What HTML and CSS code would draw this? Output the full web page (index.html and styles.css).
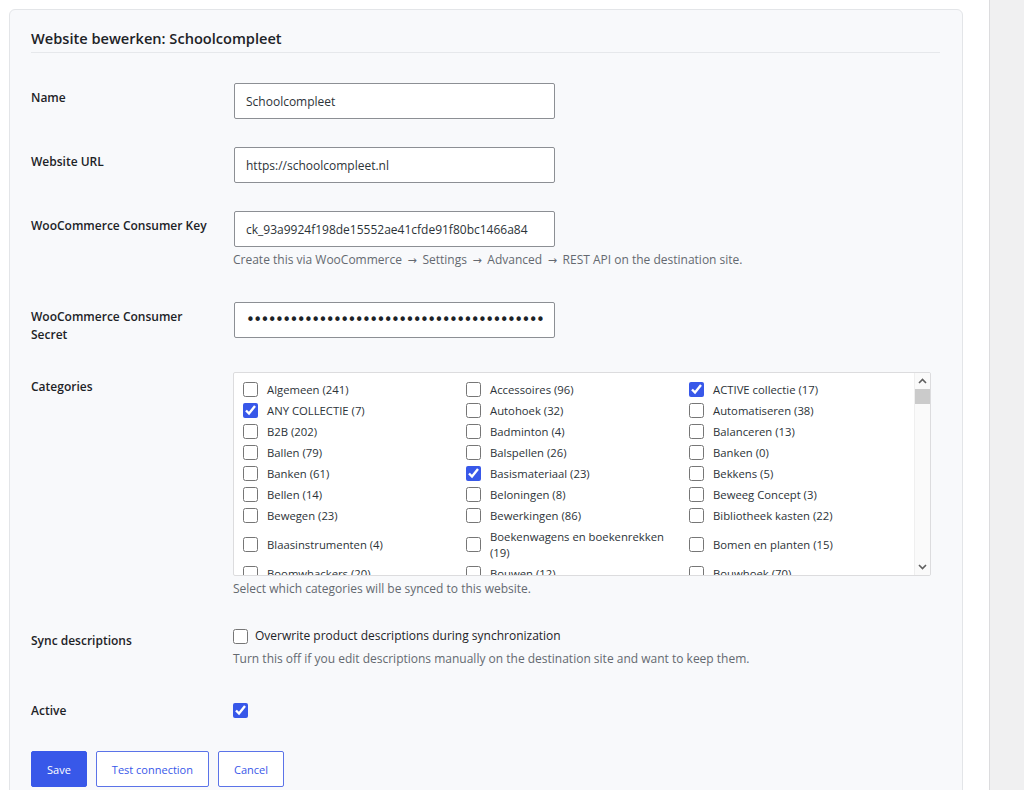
FILE: index.html
```html
<!DOCTYPE html>
<html lang="nl">
<head>
<meta charset="utf-8">
<title>Website bewerken: Schoolcompleet</title>
<link rel="stylesheet" href="styles.css">
</head>
<body>
<div class="layout">
  <main class="main">
    <section class="card">
      <h1 class="card-title">Website bewerken: Schoolcompleet</h1>
      <form class="form">
        <div class="row">
          <label class="row-label" for="f-name">Name</label>
          <div class="row-field">
            <input class="text-input" id="f-name" type="text" value="Schoolcompleet">
          </div>
        </div>
        <div class="row">
          <label class="row-label" for="f-url">Website URL</label>
          <div class="row-field">
            <input class="text-input" id="f-url" type="text" value="https://schoolcompleet.nl">
          </div>
        </div>
        <div class="row row--key">
          <label class="row-label" for="f-key">WooCommerce Consumer Key</label>
          <div class="row-field">
            <input class="text-input" id="f-key" type="text" value="ck_93a9924f198de15552ae41cfde91f80bc1466a84">
            <p class="desc">Create this via WooCommerce <span class="arrow">→</span> Settings <span class="arrow">→</span> Advanced <span class="arrow">→</span> REST API on the destination site.</p>
          </div>
        </div>
        <div class="row">
          <label class="row-label" for="f-secret">WooCommerce Consumer Secret</label>
          <div class="row-field">
            <input class="text-input text-input--secret" id="f-secret" type="password" value="cs_8f1d2a9c7e4b6a3f0d5c2e9b1a7f4c8d2e6b0a3f59c1e7">
          </div>
        </div>
        <div class="row">
          <span class="row-label">Categories</span>
          <div class="row-field">
            <div class="cat-box">
              <div class="cat-list">
                <label class="cat-item"><input class="check" type="checkbox"><span>Algemeen (241)</span></label>
                <label class="cat-item"><input class="check" type="checkbox"><span>Accessoires (96)</span></label>
                <label class="cat-item"><input class="check" type="checkbox" checked><span>ACTIVE collectie (17)</span></label>
                <label class="cat-item"><input class="check" type="checkbox" checked><span>ANY COLLECTIE (7)</span></label>
                <label class="cat-item"><input class="check" type="checkbox"><span>Autohoek (32)</span></label>
                <label class="cat-item"><input class="check" type="checkbox"><span>Automatiseren (38)</span></label>
                <label class="cat-item"><input class="check" type="checkbox"><span>B2B (202)</span></label>
                <label class="cat-item"><input class="check" type="checkbox"><span>Badminton (4)</span></label>
                <label class="cat-item"><input class="check" type="checkbox"><span>Balanceren (13)</span></label>
                <label class="cat-item"><input class="check" type="checkbox"><span>Ballen (79)</span></label>
                <label class="cat-item"><input class="check" type="checkbox"><span>Balspellen (26)</span></label>
                <label class="cat-item"><input class="check" type="checkbox"><span>Banken (0)</span></label>
                <label class="cat-item"><input class="check" type="checkbox"><span>Banken (61)</span></label>
                <label class="cat-item"><input class="check" type="checkbox" checked><span>Basismateriaal (23)</span></label>
                <label class="cat-item"><input class="check" type="checkbox"><span>Bekkens (5)</span></label>
                <label class="cat-item"><input class="check" type="checkbox"><span>Bellen (14)</span></label>
                <label class="cat-item"><input class="check" type="checkbox"><span>Beloningen (8)</span></label>
                <label class="cat-item"><input class="check" type="checkbox"><span>Beweeg Concept (3)</span></label>
                <label class="cat-item"><input class="check" type="checkbox"><span>Bewegen (23)</span></label>
                <label class="cat-item"><input class="check" type="checkbox"><span>Bewerkingen (86)</span></label>
                <label class="cat-item"><input class="check" type="checkbox"><span>Bibliotheek kasten (22)</span></label>
                <label class="cat-item"><input class="check" type="checkbox"><span>Blaasinstrumenten (4)</span></label>
                <label class="cat-item"><input class="check" type="checkbox"><span>Boekenwagens en boekenrekken (19)</span></label>
                <label class="cat-item"><input class="check" type="checkbox"><span>Bomen en planten (15)</span></label>
                <label class="cat-item"><input class="check" type="checkbox"><span>Boomwhackers (20)</span></label>
                <label class="cat-item"><input class="check" type="checkbox"><span>Bouwen (12)</span></label>
                <label class="cat-item"><input class="check" type="checkbox"><span>Bouwhoek (70)</span></label>
              </div>
              <div class="scrollbar" aria-hidden="true">
                <div class="scroll-arrow">
                  <svg width="9" height="6" viewBox="0 0 9 6"><polyline points="1,5 4.5,1.5 8,5" fill="none" stroke="#5f5f5f" stroke-width="1.6"/></svg>
                </div>
                <div class="scroll-track"><div class="scroll-thumb"></div></div>
                <div class="scroll-arrow">
                  <svg width="9" height="6" viewBox="0 0 9 6"><polyline points="1,1 4.5,4.5 8,1" fill="none" stroke="#5f5f5f" stroke-width="1.6"/></svg>
                </div>
              </div>
            </div>
            <p class="desc">Select which categories will be synced to this website.</p>
          </div>
        </div>
        <div class="row">
          <span class="row-label">Sync descriptions</span>
          <div class="row-field">
            <label class="check-line"><input class="check" type="checkbox"><span>Overwrite product descriptions during synchronization</span></label>
            <p class="desc">Turn this off if you edit descriptions manually on the destination site and want to keep them.</p>
          </div>
        </div>
        <div class="row">
          <span class="row-label">Active</span>
          <div class="row-field row-field--check">
            <input class="check" type="checkbox" checked aria-label="Active">
          </div>
        </div>
        <div class="actions">
          <button class="btn btn--primary" type="button">Save</button>
          <button class="btn btn--outline" type="button">Test connection</button>
          <button class="btn btn--outline" type="button">Cancel</button>
        </div>
      </form>
    </section>
  </main>
  <aside class="sidebar"></aside>
</div>
</body>
</html>
```
FILE: styles.css
```css
* { box-sizing: border-box; }

html, body {
  margin: 0;
  padding: 0;
  background: #ffffff;
}

body {
  font-family: "Open Sans", "Noto Sans", sans-serif;
  font-size: 12px;
  color: #1d2327;
}

.layout {
  display: flex;
  min-height: 100vh;
}

.main {
  flex: 1;
  min-width: 0;
  padding: 9px 26px 0 9px;
}

.sidebar {
  width: 35px;
  flex: none;
  background: #f0f0f1;
  border-left: 1px solid #dcdcde;
}

.card {
  background: #f8f9fb;
  border: 1px solid #e3e5e8;
  border-radius: 6px;
  padding: 18px 22px 24px 21px;
}

.card-title {
  margin: 0;
  font-size: 14.6px;
  font-weight: 600;
  line-height: 20px;
  padding-bottom: 4px;
  border-bottom: 1px solid #e6e8eb;
  color: #1d2327;
}

.form {
  margin-top: 16px;
}

.row {
  display: grid;
  grid-template-columns: 202px 1fr;
  padding: 14px 0;
}

.row--key {
  padding-bottom: 19px;
}

.row-label {
  font-weight: 600;
  font-size: 12px;
  line-height: 18px;
  padding: 6px 16px 0 0;
  color: #1d2327;
}

.row-field--check {
  padding-top: 7px;
}

.text-input {
  display: block;
  width: 321px;
  height: 36px;
  margin: 0 0 0 1px;
  padding: 0 11px;
  border: 1px solid #8c8f94;
  border-radius: 2px;
  background: #ffffff;
  font-family: "Open Sans", "Noto Sans", sans-serif;
  font-size: 12px;
  color: #2c3338;
  outline: none;
}

.text-input--secret {
  font-family: "DejaVu Sans", sans-serif;
  font-size: 15px;
  letter-spacing: -1.6px;
  color: #1d2327;
}

.desc {
  margin: 4px 0 0;
  font-size: 12px;
  line-height: 18px;
  color: #646970;
}

.arrow {
  font-family: "DejaVu Sans", sans-serif;
  font-size: 11px;
  line-height: 0;
  margin: 0 2.5px;
}

.check {
  width: 15px;
  height: 15px;
  margin: 0;
  flex: none;
  accent-color: #3858e9;
}

.cat-box {
  display: flex;
  width: 698px;
  height: 204px;
  border: 1px solid #dcdcde;
  border-radius: 2px;
  background: #ffffff;
  overflow: hidden;
}

.cat-list {
  flex: 1;
  min-width: 0;
  display: grid;
  grid-template-columns: repeat(3, 223px);
  align-content: start;
  align-items: center;
  padding: 6px 0 0 9px;
  overflow: hidden;
}

.cat-item {
  display: flex;
  align-items: center;
  gap: 9px;
  padding: 2.5px 8px 2.5px 0;
  font-size: 11.3px;
  line-height: 16px;
  color: #2c3338;
}

.scrollbar {
  width: 16px;
  flex: none;
  display: flex;
  flex-direction: column;
  background: #fafafa;
  border-left: 1px solid #efefef;
}

.scroll-arrow {
  height: 16px;
  display: flex;
  align-items: center;
  justify-content: center;
}

.scroll-track {
  flex: 1;
}

.scroll-thumb {
  height: 15px;
  background: #cbcbcb;
}

.check-line {
  display: flex;
  align-items: center;
  gap: 7px;
  line-height: 20px;
  font-size: 12px;
  color: #1d2327;
}

.actions {
  display: flex;
  gap: 9px;
  margin-top: 15px;
}

.btn {
  height: 36px;
  padding: 0 15px;
  border-radius: 2px;
  font-family: "Open Sans", "Noto Sans", sans-serif;
  font-size: 11px;
  cursor: pointer;
}

.btn--primary {
  background: #3858e9;
  border: 1px solid #3858e9;
  color: #ffffff;
}

.btn--outline {
  background: #ffffff;
  border: 1px solid #5b73e8;
  color: #3858e9;
}
```
